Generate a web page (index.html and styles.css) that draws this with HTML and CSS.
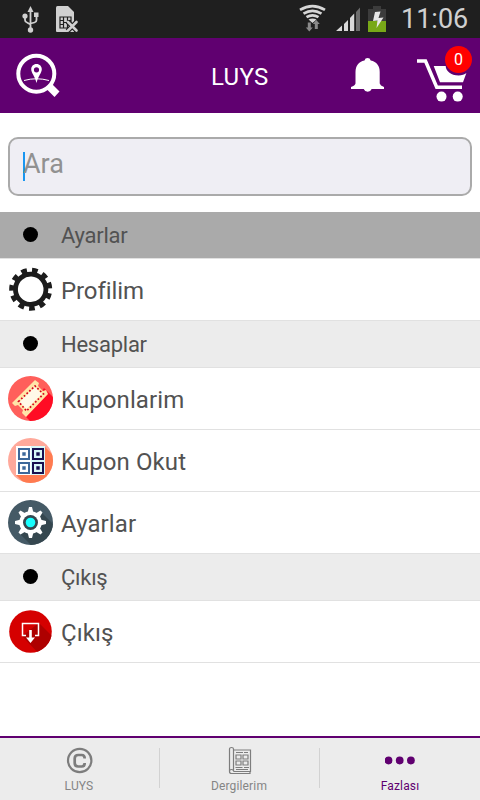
FILE: index.html
```html
<!DOCTYPE html>
<html lang="tr">
<head>
<meta charset="utf-8">
<title>LUYS</title>
<link rel="stylesheet" href="styles.css">
</head>
<body>
<div class="status">
  <svg class="status-left" width="100" height="38" viewBox="0 0 100 38">
    <g fill="#d0d0d0" stroke="none">
      <path d="M30.500 6l3 6h-6z"/><circle cx="30.500" cy="30" r="2.700"/><circle cx="25" cy="16" r="2.600"/><path d="M34 12.500h4.500v4.500H34z"/>
    </g>
    <path d="M30.500 10v19M25 17v3q0 2 2 2.500l3.500 2M36.500 16v4q0 2-2 2.500l-4 1" fill="none" stroke="#d0d0d0" stroke-width="1.800"/>
    <path d="M57.500 6H68l6 6v20H57q-1 0-1-1V7.500Q56 6 57.500 6z" fill="#d0d0d0"/>
    <path d="M60 17h11v11H60zM63.500 17v11M67.500 17v11M60 20.500h3.500M60 24.500h3.500M67.500 20.500H71M63.500 22.500h4" fill="none" stroke="#1f1f1f" stroke-width="1.200"/>
    <path d="M67.500 21.500l9.500 9.500M77 21.500L67.500 31" stroke="#1f1f1f" stroke-width="5"/>
    <path d="M68 22l8.500 8.500M76.500 22L68 30.500" stroke="#d0d0d0" stroke-width="2.600" stroke-linecap="round"/>
  </svg>
  <svg class="status-right" width="100" height="38" viewBox="296 0 100 38">
    <g fill="none" stroke="#d6d6d6" stroke-width="2.700">
      <path d="M300 9.800q12.500-7.500 25 0M303.500 13.600q9-5.500 18 0M306.500 17.200q6-3.700 12 0"/>
    </g>
    <path d="M308.500 19.500q4-2.200 8 0l-4 3.500z" fill="#d6d6d6"/>
    <path d="M307.800 22.500v5h-2l3.500 4 3.500-4h-2v-5zM317.800 29v-5h2l-3.500-4-3.500 4h2v5z" fill="#8a8a8a"/>
    <path d="M336 31l6-5.500V31zM344 24l4-4v11h-4zM350 18l4.200-4.500V31H350z" fill="#d8d8d8"/>
    <path d="M356 12l4-4.500V31h-4z" fill="#6d6d6d"/>
    <path d="M373 6h8v3h5v13h-18V9h5z" fill="#3c3c3c"/>
    <path d="M368 21h18v11h-18z" fill="#78a818"/>
    <path d="M375 12l5.500-.5-2 6.500 5-.5-7 10.500 1-7.500-4.500.5z" fill="#e8e8e8"/>
  </svg>
  <span class="clock">11:06</span>
</div>
<header class="bar">
  <svg class="logo" width="50" height="50" viewBox="12 50 50 50">
    <circle cx="36.300" cy="73.700" r="18" fill="none" stroke="#fff" stroke-width="4"/>
    <path d="M46 88.500l5-5.500 8.500 8.500-5 5.500z" fill="#fff"/>
    <path fill-rule="evenodd" d="M36.500 64c-3.300 0-5.300 2.500-5.300 5.300 0 3.700 3.300 6 5.300 13.700 2-7.700 5.300-10 5.300-13.700 0-2.800-2-5.300-5.300-5.300zm0 3.200a2.600 2.600 0 1 1 0 5.200 2.600 2.600 0 0 1 0-5.200z" fill="#fff"/>
    <path d="M24 80.500q12.500-3.500 25 0" fill="none" stroke="#fff" stroke-width="1"/>
  </svg>
  <h1 class="title">LUYS</h1>
  <svg class="bell" width="36" height="40" viewBox="350 56 36 40">
    <path d="M364.500 60.500a3.200 3.200 0 0 1 6.200 0c6 1.200 9 5.500 9 11.500v11.500q.5 2 4.300 3.500v2h-12.300a4.300 4.300 0 0 1-8 0H351v-2q4-1.500 4.500-3.500V72c0-6 3-10.300 9-11.500z" fill="#fff"/>
  </svg>
  <div class="cart">
    <svg width="56" height="46" viewBox="415 57 56 46">
      <path d="M417 61h8.500l11.200 26.300H462" fill="none" stroke="#fff" stroke-width="3.500"/>
      <path d="M433.700 66h12c0 4.500 5 9.500 13 9.500 3 0 6-1 7.700-2.500l-3.400 9.200h-23z" fill="#fff"/>
      <circle cx="441.500" cy="96.600" r="5" fill="#fff"/><circle cx="457.700" cy="96.600" r="5" fill="#fff"/>
    </svg>
    <span class="badge">0</span>
  </div>
</header>
<main class="content">
  <div class="search"><span class="caret"></span><span>Ara</span></div>
  <div class="section active"><i class="dot"></i><span>Ayarlar</span></div>
  <div class="row">
    <svg class="icon" viewBox="0 0 46 46">
      <g transform="rotate(-86 22.700 22.300)">
        <circle cx="22.700" cy="22.300" r="15.200" fill="none" stroke="#1c1c1c" stroke-width="4.800"/>
        <circle cx="22.700" cy="22.300" r="19" fill="none" stroke="#1c1c1c" stroke-width="5" pathLength="22" stroke-dasharray="1.050 .95"/>
      </g>
    </svg><span class="profile">Profilim</span>
  </div>
  <div class="section"><i class="dot"></i><span>Hesaplar</span></div>
  <div class="row">
    <svg class="icon" viewBox="0 0 46 46">
      <clipPath id="disc"><circle cx="22.500" cy="22.500" r="22.500"/></clipPath>
      <g clip-path="url(#disc)">
        <path d="M0 0h46v46H0z" fill="#ff5f5b"/>
        <path d="M36 12l10 10v25H24L18 41z" fill="#ff0c24"/>
        <path d="M4 27L27 4l4 3-1 3 5 5 3-1 2 4-22 23-4-4 1-3-5-5-3 1z" fill="#ffe5a8"/>
        <path d="M11.500 26L27 11l7 7-15.500 15z" fill="#fff9e8"/>
        <path d="M10.500 25.500L27 10l8.500 8-17 17z" fill="none" stroke="#d5001d" stroke-width="1.700" stroke-dasharray="1.700 2"/>
      </g>
    </svg><span>Kuponlarim</span>
  </div>
  <div class="row">
    <svg class="icon" viewBox="0 0 46 46">
      <g clip-path="url(#disc)">
        <path d="M0 0h46v46H0z" fill="#ffa99b"/>
        <path d="M36 8l10 10v28H17L8 37z" fill="#ff7b50"/>
      </g>
      <path d="M8 8h15v29H8z" fill="#fff"/><path d="M23 8h14v29H23z" fill="#d8f8f8"/>
      <g fill="none" stroke="#3d689a" stroke-width="2"><path d="M11 11h10v10H11zM11 25h10v10H11z"/></g>
      <g fill="none" stroke="#171050" stroke-width="2"><path d="M25 11h10v10H25zM25 25h10v10H25z"/></g>
      <path d="M14.300 14.300h3.400v3.400h-3.400zM14.300 28.300h3.400v3.400h-3.400z" fill="#3d689a"/>
      <path d="M28.300 14.300h3.400v3.400h-3.400zM28.300 28.300h3.400v3.400h-3.400z" fill="#171050"/>
    </svg><span>Kupon Okut</span>
  </div>
  <div class="row">
    <svg class="icon" viewBox="0 0 46 46">
      <g clip-path="url(#disc)">
        <path d="M0 0h46v46H0z" fill="#455a66"/>
        <path d="M33 12l13 13v21H24L12 34z" fill="#35474f"/>
      </g>
      <circle cx="22.500" cy="22.500" r="9" fill="none" stroke="#fff" stroke-width="4.500"/>
      <path d="M21 7h3l1.500 6h-6zM21 38h3l1.500-6h-6zM7 21v3l6 1.500v-6zM38 21v3l-6 1.500v-6zM10.500 12.500l2-2 5 3-4 4zM34.500 12.500l-2-2-5 3 4 4zM10.500 32.500l2 2 5-3-4-4zM34.500 32.500l-2 2-5-3 4-4z" fill="#fff"/>
      <circle cx="22.500" cy="22.500" r="7.500" fill="#35474f"/>
      <circle cx="22.500" cy="22.500" r="4.800" fill="#18ffff"/>
    </svg><span>Ayarlar</span>
  </div>
  <div class="section"><i class="dot"></i><span>Çıkış</span></div>
  <div class="row">
    <svg class="icon" viewBox="0 0 46 46">
      <clipPath id="exit"><circle cx="22.500" cy="22.500" r="21.300"/></clipPath>
      <g clip-path="url(#exit)">
        <path d="M0 0h46v46H0z" fill="#d50000"/>
        <path d="M31 14l15 15v17H32L14 27z" fill="#ae0000"/>
      </g>
      <path d="M18 26.500h-3.500v-12h16v12H27" fill="none" stroke="#fff" stroke-width="1.500"/>
      <path d="M21.200 21h2.600v7.500H27L22.500 34 18 28.500h3.200z" fill="#fff"/>
    </svg><span>Çıkış</span>
  </div>
</main>
<nav class="tabs">
  <div class="tab">
    <svg width="30" height="30" viewBox="0 0 30 30">
      <circle cx="14.700" cy="14.500" r="11.700" fill="none" stroke="#7d7d7d" stroke-width="2.200"/>
      <path d="M19.700 12.500q0-3.500-3-3.500h-3.500q-3.500 0-3.500 3.500v4.500q0 3.500 3.500 3.500h3.500q3 0 3-3.500" fill="none" stroke="#7d7d7d" stroke-width="2.700"/>
    </svg><span>LUYS</span>
  </div>
  <div class="tab">
    <svg width="30" height="30" viewBox="0 0 30 30" fill="none" stroke="#7d7d7d" stroke-width="1.200">
      <path d="M8.500 24V3q0-1.500-2-1.500T4.500 3v22.500q0 2 2 2H25v-2M8.500 4h17v21.500H9q-.5-2-2.500-2t-2 2M11 6.500h7M19 6.500h4M11 9h5v4h-5zM18 9h5v4h-5zM11 15h5v4h-5zM18 15h5v4h-5zM10.500 21.500h7M19 21.500h5M11 23.500h12"/>
    </svg><span>Dergilerim</span>
  </div>
  <div class="tab selected">
    <svg width="30" height="30" viewBox="0 0 30 30" fill="#600070">
      <circle cx="3.500" cy="14.500" r="3.900"/><circle cx="14.700" cy="14.500" r="3.900"/><circle cx="25.900" cy="14.500" r="3.900"/>
    </svg><span>Fazlası</span>
  </div>
</nav>
</body>
</html>
```
FILE: styles.css
```css
* { box-sizing: border-box; }
body {
  margin: 0;
  width: 480px;
  height: 800px;
  display: flex;
  flex-direction: column;
  overflow: hidden;
  background: #fff;
  color: #525252;
  font-family: Roboto, "Liberation Sans", sans-serif;
}
svg { display: block; flex: none; }
.status {
  height: 38px;
  flex: none;
  display: flex;
  background: #1f1f1f;
}
.status-right { margin-left: 196px; }
.clock {
  margin-left: 5px;
  color: #d0d0d0;
  font-size: 27px;
  line-height: 38px;
}
.bar {
  height: 75px;
  flex: none;
  display: flex;
  align-items: flex-start;
  background: #600070;
  color: #fff;
}
.logo { margin: 12px 0 0 12px; }
.title {
  margin: 0 0 0 149px;
  width: 139px;
  font-size: 24px;
  font-weight: 400;
  line-height: 78px;
  letter-spacing: .3px;
}
.bell { margin-top: 18px; }
.cart { position: relative; margin: 19px 0 0 29px; }
.badge {
  position: absolute;
  left: 30px;
  top: -11px;
  width: 27px;
  height: 27px;
  border-radius: 50%;
  background: #f00;
  font-size: 16px;
  line-height: 28px;
  text-align: center;
}
.content { flex: 1; }
.search {
  height: 59px;
  margin: 24px 8px 16px;
  padding: 13px;
  display: flex;
  border: 2px solid #aaa;
  border-radius: 10px;
  background: #efeef4;
  color: #919191;
  font-size: 27px;
  line-height: 24px;
}
.caret { width: 2px; height: 29px; margin-right: -2px; background: #1996f0; }
.section, .row {
  display: flex;
  align-items: center;
  border-bottom: 1px solid #e1e1e1;
}
.section {
  height: 47px;
  background: #ececec;
  font-size: 22px;
  letter-spacing: -.25px;
}
.section.active { background: #aaa; }
.dot {
  width: 15px;
  height: 15px;
  margin: 0 23px 1px 23px;
  border-radius: 50%;
  background: #000;
}
.section span { padding-top: 1px; }
.row { height: 62px; font-size: 24px; letter-spacing: .1px; }
.row .profile { letter-spacing: -.1px; }
.icon { width: 46px; height: 46px; margin: 0 7px 0 8px; }
.row span { padding-top: 2px; }
.tabs {
  height: 64px;
  flex: none;
  display: flex;
  border-top: 2px solid #600070;
  background: #ececec;
}
.tab {
  width: 160px;
  padding: 8px 2px 0 0;
  display: flex;
  flex-direction: column;
  align-items: center;
  color: #858585;
  font-size: 12px;
  line-height: 20px;
  letter-spacing: .15px;
  background: linear-gradient(#d2d2d2, #d2d2d2) right 10px / 1px 40px no-repeat;
}
.tab.selected { padding-right: 0; background: none; color: #600070; }
.tab svg { margin-left: 2px; }
.tab.selected svg { margin-left: 0; }
```
